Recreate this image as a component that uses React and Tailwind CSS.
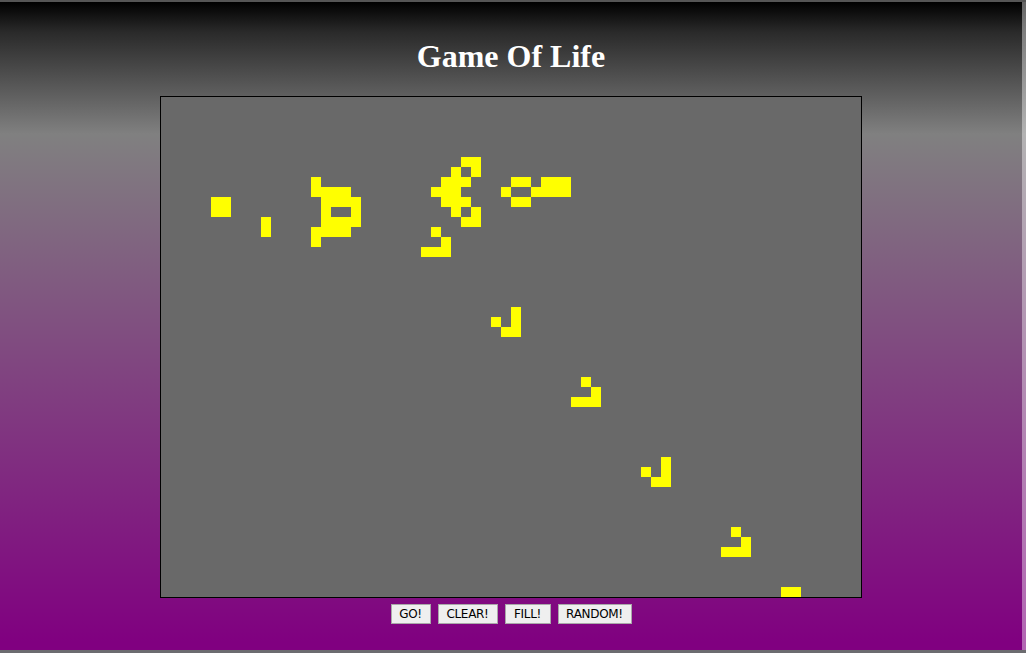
import React from "react";

const LIVE = {
  6: [30, 31],
  7: [29, 31],
  8: [15, 28, 29, 30, 35, 36, 38, 39, 40],
  9: [15, 16, 17, 18, 27, 28, 29, 34, 37, 38, 39, 40],
  10: [5, 6, 16, 17, 18, 19, 28, 29, 30, 35, 36],
  11: [5, 6, 16, 19, 29, 31],
  12: [10, 16, 17, 18, 19, 30, 31],
  13: [10, 15, 16, 17, 18, 27],
  14: [15, 28],
  15: [26, 27, 28],
  21: [35],
  22: [33, 35],
  23: [34, 35],
  28: [42],
  29: [43],
  30: [41, 42, 43],
  36: [50],
  37: [48, 50],
  38: [49, 50],
  43: [57],
  44: [58],
  45: [56, 57, 58],
  49: [62, 63],
};

const COLS = 70;
const ROWS = 50;

function Board() {
  const cells = [];
  for (let r = 0; r < ROWS; r++) {
    const live = LIVE[r] || [];
    for (let c = 0; c < COLS; c++) {
      const on = live.includes(c);
      cells.push(
        <div
          key={r * COLS + c}
          className={on ? "w-[10px] h-[10px] bg-[#ffff00]" : "w-[10px] h-[10px]"}
        />
      );
    }
  }
  return (
    <div className="border border-black bg-[#696969] grid grid-cols-[repeat(70,10px)] grid-rows-[repeat(50,10px)] w-[702px] h-[502px]">
      {cells}
    </div>
  );
}

export default function App() {
  const btn =
    "h-[20px] bg-[#efefef] border border-[#a9a9a9] text-[12px] text-black flex items-center justify-center font-['DejaVu_Sans',Tahoma,sans-serif] tracking-[-0.3px]";
  return (
    <div className="relative w-[1026px] h-[653px] pr-[4px] overflow-hidden bg-[linear-gradient(to_bottom,#000000_0px,#2a2a2a_30px,#808080_132px,#800080_640px,#800080_653px)] border-t-2 border-t-[#555555] border-b-[3px] border-b-[#6c6c70] flex flex-col items-center">
      <h1 className="mt-[36px] leading-[36px] text-[32px] font-bold text-white font-['Liberation_Serif','Times_New_Roman',serif]">
        Game Of Life
      </h1>
      <div className="mt-[22px]">
        <Board />
      </div>
      <div className="mt-[6px] flex gap-[7px]">
        <button className={btn + " w-[40px]"}>GO!</button>
        <button className={btn + " w-[60px]"}>CLEAR!</button>
        <button className={btn + " w-[46px]"}>FILL!</button>
        <button className={btn + " w-[74px]"}>RANDOM!</button>
      </div>
      <div className="absolute top-0 right-0 w-[4px] h-full bg-white/40" />
    </div>
  );
}
